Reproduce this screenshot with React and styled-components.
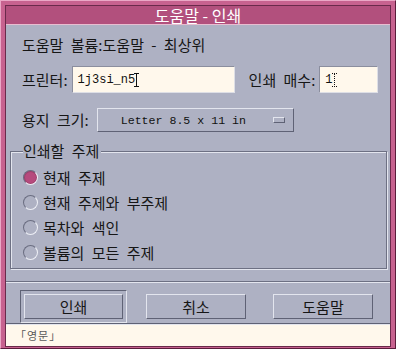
import styled, { createGlobalStyle } from 'styled-components';

const GlobalStyle = createGlobalStyle`
  html, body {
    margin: 0;
    padding: 0;
    background: #ffffff;
  }
  * {
    box-sizing: border-box;
  }
`;

const LAVENDER = '#aeb1c3';
const DARK = '#5f6275';
const LIGHT = '#e3e5ee';
const CREAM = '#fff8ec';
const KR = `"Noto Sans CJK KR", "Noto Sans", sans-serif`;
const MONO = `"Liberation Mono", "DejaVu Sans Mono", monospace`;

const Frame = styled.div`
  width: 396px;
  height: 349px;
  padding: 4px 4px 1px 4px;
  background: #c7628f;
  border: 1px solid;
  border-color: #eaa8c6 #5a1c3b #5a1c3b #eaa8c6;
`;

const Inner = styled.div`
  height: 100%;
  display: flex;
  flex-direction: column;
  border: 1px solid #6a2a4b;
  background: ${LAVENDER};
`;

const TitleBar = styled.div`
  height: 19px;
  background: #b2507d;
  border-bottom: 1px solid #e8bdd0;
  color: #ffffff;
  font-family: ${KR};
  font-size: 16px;
  line-height: 18px;
  text-align: center;
`;

const Body = styled.div`
  flex: 1;
  display: flex;
  flex-direction: column;
  font-family: ${KR};
  font-size: 15px;
  word-spacing: 4px;
  color: #161616;
`;

const TopForm = styled.div`
  padding: 10px 9px 0 16px;
`;

const Heading = styled.div`
  height: 20px;
  line-height: 20px;
`;

const Row = styled.div`
  display: flex;
  align-items: center;
  margin-top: ${({ $top }) => $top}px;
`;

const Label = styled.span`
  line-height: 20px;
  margin-left: ${({ $left }) => $left || 0}px;
  white-space: nowrap;
`;

const Field = styled.div`
  display: flex;
  align-items: center;
  width: ${({ $width }) => $width}px;
  height: 27px;
  margin-left: 4px;
  padding-left: 5px;
  background: ${CREAM};
  border: 1px solid;
  border-color: #8b8e9e #dedfe6 #dedfe6 #8b8e9e;
  font-family: ${MONO};
  font-size: 12px;
  word-spacing: 0;
  color: #111;
`;

const Caret = styled.span`
  position: relative;
  display: inline-block;
  width: 5px;
  height: 14px;
  margin-left: -1px;

  &::before {
    content: '';
    position: absolute;
    left: 2px;
    top: 0;
    bottom: 0;
    border-left: 1px ${({ $dotted }) => ($dotted ? 'dotted' : 'solid')} #111;
  }
  &::after {
    content: '';
    position: absolute;
    left: 0;
    right: 0;
    top: 0;
    bottom: 0;
    border-top: 1px ${({ $dotted }) => ($dotted ? 'dotted' : 'solid')} #111;
    border-bottom: 1px ${({ $dotted }) => ($dotted ? 'dotted' : 'solid')} #111;
  }
`;

const Dropdown = styled.div`
  display: flex;
  align-items: center;
  width: 197px;
  height: 24px;
  margin-left: 8px;
  padding-left: 23px;
  border: 1px solid;
  border-color: ${LIGHT} ${DARK} ${DARK} ${LIGHT};
  font-family: ${MONO};
  font-size: 11.6px;
  word-spacing: 0;
  color: #111;
`;

const DropText = styled.span`
  flex: 1;
  white-space: nowrap;
`;

const DropMark = styled.span`
  width: 12px;
  height: 6px;
  margin-right: 8px;
  border: 1px solid;
  border-color: ${LIGHT} ${DARK} ${DARK} ${LIGHT};
`;

const GroupBox = styled.div`
  margin: 19px 3px 0 4px;
  padding: 0 0 3px 12px;
  border: 1px solid #6d7083;
  box-shadow: inset 1px 1px 0 ${LIGHT}, 1px 1px 0 ${LIGHT};
`;

const Legend = styled.div`
  width: fit-content;
  margin: -10px 0 0 0;
  padding: 0 2px 0 0;
  height: 18px;
  line-height: 18px;
  background: ${LAVENDER};
`;

const RadioList = styled.div`
  margin-top: 5px;
  display: flex;
  flex-direction: column;
`;

const RadioRow = styled.div`
  height: 25px;
  display: flex;
  align-items: center;
  gap: 5px;
`;

const RadioDot = styled.span`
  width: 15px;
  height: 15px;
  border-radius: 50%;
  border: 1px solid;
  border-color: #6a6d80 #eef0f6 #eef0f6 #6a6d80;
  background: ${({ $on }) => ($on ? '#b64a7d' : 'transparent')};
  box-shadow: ${({ $on }) => ($on ? 'inset 0 0 0 1px #9c3f6a' : 'none')};
`;

const Separator = styled.div`
  height: 2px;
  margin-top: 12px;
  border-top: 1px solid #6d7083;
  border-bottom: 1px solid ${LIGHT};
`;

const ButtonRow = styled.div`
  display: flex;
  align-items: center;
  padding: 7px 0 0 14px;
  height: 40px;
`;

const DefaultFrame = styled.div`
  width: 107px;
  height: 33px;
  padding: 3px;
  border: 1px solid;
  border-color: ${DARK} ${LIGHT} ${LIGHT} ${DARK};
  display: flex;
`;

const Button = styled.button`
  width: ${({ $width }) => $width || 100}px;
  height: 25px;
  margin-left: ${({ $left }) => $left || 0}px;
  padding: 0;
  background: ${LAVENDER};
  border: 1px solid;
  border-color: ${LIGHT} ${DARK} ${DARK} ${LIGHT};
  font-family: ${KR};
  font-size: 15px;
  line-height: 20px;
  color: #161616;
`;

const StatusBar = styled.div`
  height: 23px;
  border-top: 1px solid ${DARK};
  box-shadow: inset 0 1px 0 ${LIGHT};
  background: ${CREAM};
  padding: 2px 0 0 9px;
  font-family: ${KR};
  font-size: 11px;
  line-height: 18px;
  color: #5a5a5a;
  letter-spacing: 1px;
`;

const topics = ['현재 주제', '현재 주제와 부주제', '목차와 색인', '볼륨의 모든 주제'];

export default function App() {
  return (
    <>
      <GlobalStyle />
      <Frame>
        <Inner>
          <TitleBar>도움말 - 인쇄</TitleBar>
          <Body>
            <TopForm>
              <Heading>도움말 볼륨:도움말 - 최상위</Heading>
              <Row $top={11}>
                <Label>프린터:</Label>
                <Field $width={163}>
                  1j3si_n5
                  <Caret />
                </Field>
                <Label $left={14}>인쇄 매수:</Label>
                <Field $width={59}>
                  1
                  <Caret $dotted />
                </Field>
              </Row>
              <Row $top={15}>
                <Label>용지 크기:</Label>
                <Dropdown>
                  <DropText>Letter 8.5 x 11 in</DropText>
                  <DropMark />
                </Dropdown>
              </Row>
            </TopForm>
            <GroupBox>
              <Legend>인쇄할 주제</Legend>
              <RadioList>
                {topics.map((t, i) => (
                  <RadioRow key={t}>
                    <RadioDot $on={i === 0} />
                    <span>{t}</span>
                  </RadioRow>
                ))}
              </RadioList>
            </GroupBox>
            <Separator />
            <ButtonRow>
              <DefaultFrame>
                <Button $width={99}>인쇄</Button>
              </DefaultFrame>
              <Button $left={19}>취소</Button>
              <Button $left={27}>도움말</Button>
            </ButtonRow>
          </Body>
          <StatusBar>「영문」</StatusBar>
        </Inner>
      </Frame>
    </>
  );
}
